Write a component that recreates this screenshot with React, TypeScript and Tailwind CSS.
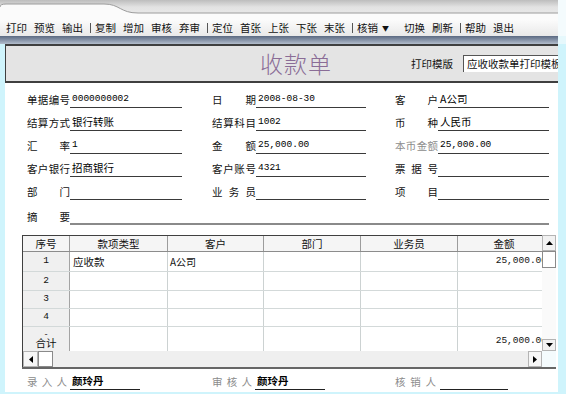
import React from 'react';

const cjk = "font-['Noto_Sans_CJK_SC',sans-serif]";
const mono = "font-['Liberation_Mono',monospace]";

function Lbl({ t, gray = false, w }: { t: string; gray?: boolean; w: string }) {
  return (
    <div className={`flex justify-between shrink-0 leading-[14px] pb-[1px] ${w} ${gray ? 'text-[#8c8c8c]' : 'text-[#111]'}`}>
      {t.split('').map((c, i) => (
        <span key={i}>{c}</span>
      ))}
    </div>
  );
}

function Val({ v }: { v: string }) {
  const ascii = /^[\x00-\x7f]*$/.test(v);
  return (
    <span className={`pl-[2px] pb-[2px] leading-[12px] ${ascii ? `${mono} text-[9.5px]` : 'text-[10.5px]'}`}>{v}</span>
  );
}

type Cell = [string, string, boolean?];
const formRows: Cell[][] = [
  [['单据编号', '0000000002'], ['日期', '2008-08-30'], ['客户', 'A公司']],
  [['结算方式', '银行转账'], ['结算科目', '1002'], ['币种', '人民币']],
  [['汇率', '1'], ['金额', '25,000.00'], ['本币金额', '25,000.00', true]],
  [['客户银行', '招商银行'], ['客户账号', '4321'], ['票据号', '']],
  [['部门', ''], ['业务员', ''], ['项目', '']],
];

const cellW = ['w-[185px]', 'w-[183px]', 'w-[154px]'];
const lblW = ['w-[43px]', 'w-[44px]', 'w-[43px]'];
const fieldW = ['w-[112px]', 'w-[110px]', 'w-[111px]'];

function Arrow({ dir }: { dir: 'up' | 'down' | 'left' | 'right' }) {
  const pts =
    dir === 'up' ? '0,4 3.5,0 7,4' : dir === 'down' ? '0,0 3.5,4 7,0' : dir === 'left' ? '4,0 0,3.5 4,7' : '0,0 4,3.5 0,7';
  const w = dir === 'up' || dir === 'down' ? 7 : 4;
  const h = dir === 'up' || dir === 'down' ? 4 : 7;
  return (
    <svg width={w} height={h} viewBox={`0 0 ${w} ${h}`}>
      <polygon points={pts} fill="#000" />
    </svg>
  );
}

const toolGroups = [
  ['打印', '预览', '输出'],
  ['复制', '增加', '审核', '弃审'],
  ['定位', '首张', '上张', '下张', '末张'],
  ['核销▼', '切换', '刷新'],
  ['帮助', '退出'],
];

export default function App() {
  return (
    <div className={`w-[566px] h-[394px] overflow-hidden bg-[#cff4fc] flex flex-col ${cjk}`}>
      {/* window chrome */}
      <div className="flex h-[20px]">
        <svg width="558" height="20" viewBox="0 0 558 20">
          <defs>
            <linearGradient id="chg" x1="0" y1="0" x2="0" y2="1">
              <stop offset="0" stopColor="#bdbdbd" />
              <stop offset="0.35" stopColor="#e2e2e2" />
              <stop offset="1" stopColor="#eeeeee" />
            </linearGradient>
          </defs>
          <rect width="558" height="20" fill="url(#chg)" />
          <path d="M0 20 L0 7 Q0 4 6 4 L104 4 C120 4 120 13 138 13 L558 13 L558 20 Z" fill="#fbfbfb" />
          <path d="M0 7 Q0 4 6 4 L104 4 C120 4 120 13 138 13 L558 13" fill="none" stroke="#9c9c9c" strokeWidth="1" />
        </svg>
        <div className="flex-1 bg-[#f4fbfd]" />
      </div>
      {/* toolbar */}
      <div className="flex h-[16px]">
        <div className="w-[558px] bg-gradient-to-b from-[#fbfbfb] to-[#e9e9e9] flex items-center pl-[6px] gap-[7px] text-[10.5px] text-[#111] leading-none">
          {toolGroups.map((g, gi) => (
            <div key={gi} className={`flex items-center gap-[7px] ${gi > 0 ? 'border-l border-[#555] pl-[4px]' : ''}`}>
              {g.map((t) =>
                t.endsWith('▼') ? (
                  <span key={t} className="flex items-center gap-[4px]">
                    {t.slice(0, 2)}
                    <span className="text-[7px]">▼</span>
                    <span className="w-[4px]" />
                  </span>
                ) : (
                  <span key={t}>{t}</span>
                )
              )}
            </div>
          ))}
        </div>
        <div className="flex-1 bg-[#f4fbfd]" />
      </div>
      {/* gradient bar */}
      <div className="flex h-[8px]">
        <div className="w-[558px] bg-gradient-to-b from-[#5b6a82] to-[#b3bdcc]" />
        <div className="flex-1 bg-[#e6f8fc]" />
      </div>
      {/* main panel */}
      <div className="ml-[5px] w-[553px] flex flex-col">
        <div className="h-[39px] border-t-2 border-b-2 border-l border-[#3f3f3f] bg-[#e4e4e4] flex items-center">
          <div className="pl-[254px] text-[23px] leading-none text-[#8a6c96] font-light tracking-[1px]">收款单</div>
          <div className="ml-auto flex items-center">
            <span className="text-[10.5px] text-[#111]">打印模版</span>
            <div className="ml-[10px] w-[95px] h-[17px] bg-white border-t border-l border-[#555] overflow-hidden whitespace-nowrap text-[10.5px] leading-[15px] pl-[3px] text-[#111]">
              应收收款单打印模板
            </div>
          </div>
        </div>
        <div className="bg-white flex flex-col pt-[2px] pb-[2px]">
          {/* form */}
          <div className="flex flex-col pl-[22px] text-[10.5px]">
            {formRows.map((r, i) => (
              <div key={i} className="flex h-[23px] items-end">
                {r.map(([l, v, g], j) => (
                  <div key={j} className={`flex items-end ${cellW[j]}`}>
                    <Lbl t={l} gray={!!g} w={lblW[j]} />
                    <div className={`h-[16px] border-b border-[#3a3a3a] flex items-end ${fieldW[j]}`}>
                      <Val v={v} />
                    </div>
                  </div>
                ))}
              </div>
            ))}
            <div className="flex h-[25px] items-end">
              <Lbl t="摘要" w="w-[43px]" />
              <div className="h-[16px] w-[479px] border-b-2 border-[#8a8a8a]" />
            </div>
          </div>
          {/* table */}
          <div className="ml-[17px] mt-[10px] w-[534px] flex flex-col text-[10.5px] text-[#111]">
            <div className="flex">
              <div className="w-[520px] border-l border-t border-[#404040] flex flex-col">
                <div className="flex h-[16px] border-b border-[#8c8c8c] bg-[#f5f5f5] leading-[15px] text-center">
                  <div className="w-[47px] border-r border-[#9c9c9c]">序号</div>
                  <div className="w-[98px] border-r border-[#9c9c9c]">款项类型</div>
                  <div className="w-[96px] border-r border-[#9c9c9c]">客户</div>
                  <div className="w-[97px] border-r border-[#9c9c9c]">部门</div>
                  <div className="w-[97px] border-r border-[#9c9c9c]">业务员</div>
                  <div className="flex-1 pl-[8px]">金额</div>
                </div>
                {[
                  { n: '1', a: '应收款', b: 'A公司', m: '25,000.00', h: 'h-[20px]' },
                  { n: '2', a: '', b: '', m: '', h: 'h-[19px]' },
                  { n: '3', a: '', b: '', m: '', h: 'h-[18px]' },
                  { n: '4', a: '', b: '', m: '', h: 'h-[18px]' },
                ].map((r) => (
                  <div key={r.n} className={`flex border-b border-[#d3d9d9] ${r.h}`}>
                    <div className={`w-[47px] bg-[#f0f0f0] border-r border-[#a4a4a4] flex items-center justify-center ${mono} text-[9.5px]`}>{r.n}</div>
                    <div className="w-[98px] border-r border-[#ccd2d2] flex items-center pl-[3px]">{r.a}</div>
                    <div className="w-[96px] border-r border-[#ccd2d2] flex items-center pl-[2px] text-[10px]">{r.b}</div>
                    <div className="w-[97px] border-r border-[#ccd2d2]" />
                    <div className="w-[97px] border-r border-[#ccd2d2]" />
                    <div className="flex-1 overflow-hidden flex items-center justify-end">
                      <span className={`${mono} text-[9.5px] mr-[-5px] whitespace-nowrap`}>{r.m}</span>
                    </div>
                  </div>
                ))}
                <div className="flex h-[24px]">
                  <div className="w-[47px] bg-[#f0f0f0] border-r border-[#a4a4a4] flex flex-col items-center justify-center">
                    <span className="text-[9px] leading-[7px] h-[7px]">-</span>
                    <span className="leading-[12px]">合计</span>
                  </div>
                  <div className="w-[98px] border-r border-[#ccd2d2]" />
                  <div className="w-[96px] border-r border-[#ccd2d2]" />
                  <div className="w-[97px] border-r border-[#ccd2d2]" />
                  <div className="w-[97px] border-r border-[#ccd2d2]" />
                  <div className="flex-1 overflow-hidden flex items-end justify-end pb-[3px]">
                    <span className={`${mono} text-[9.5px] mr-[-5px] whitespace-nowrap`}>25,000.00</span>
                  </div>
                </div>
              </div>
              {/* vertical scrollbar */}
              <div className="w-[14px] flex flex-col bg-[#fafafa]">
                <div className="h-[16px] border border-[#b4b4b4] bg-[#f2f2f2] flex items-center justify-center">
                  <Arrow dir="up" />
                </div>
                <div className="h-[17px] border border-[#8a8a8a] bg-white" />
                <div className="flex-1" />
                <div className="h-[12px] border border-[#b4b4b4] bg-[#f2f2f2] flex items-center justify-center">
                  <Arrow dir="down" />
                </div>
              </div>
            </div>
            {/* horizontal scrollbar */}
            <div className="flex h-[16px]">
              <div className="w-[520px] flex bg-[#efefef] border-l border-[#404040]">
                <div className="w-[15px] border border-[#b4b4b4] bg-[#f6f6f6] flex items-center justify-center">
                  <Arrow dir="left" />
                </div>
                <div className="w-[15px] border border-[#8a8a8a] bg-white" />
                <div className="flex-1" />
                <div className="w-[14px] border border-[#b4b4b4] bg-[#f6f6f6] flex items-center justify-center">
                  <Arrow dir="right" />
                </div>
              </div>
              <div className="flex-1 bg-[#f4fbfd]" />
            </div>
            <div className="h-[2px] bg-[#666]" />
          </div>
          {/* footer */}
          <div className="flex pl-[22px] h-[21px] items-end text-[10.5px]">
            <div className="flex items-end w-[185px]">
              <Lbl t="录入人" gray w="w-[40px]" />
              <div className="ml-[3px] w-[70px] h-[16px] border-b border-[#222] flex items-end">
                <span className="pl-[2px] pb-[2px] leading-[12px] font-bold">颜玲丹</span>
              </div>
            </div>
            <div className="flex items-end w-[183px]">
              <Lbl t="审核人" gray w="w-[40px]" />
              <div className="ml-[3px] w-[70px] h-[16px] border-b border-[#222] flex items-end">
                <span className="pl-[2px] pb-[2px] leading-[12px] font-bold">颜玲丹</span>
              </div>
            </div>
            <div className="flex items-end">
              <Lbl t="核销人" gray w="w-[41px]" />
              <div className="ml-[4px] w-[68px] h-[16px] border-b border-[#222]" />
            </div>
          </div>
        </div>
      </div>
    </div>
  );
}
